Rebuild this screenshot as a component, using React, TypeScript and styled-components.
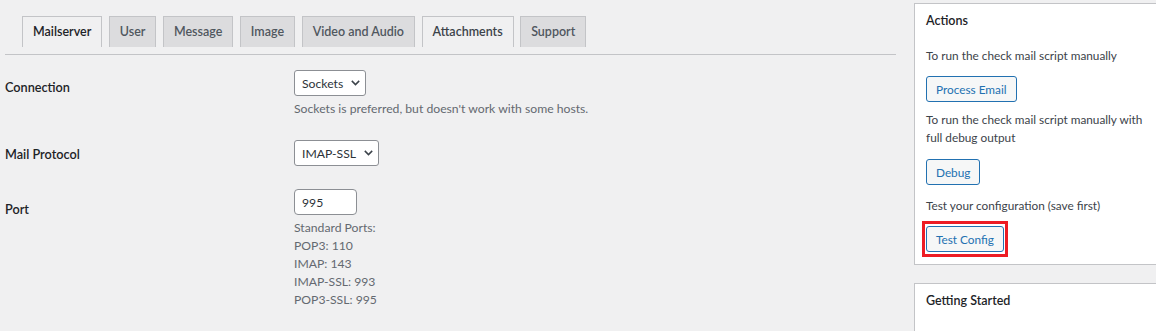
import React from "react";
import styled, { createGlobalStyle } from "styled-components";

const GlobalStyle = createGlobalStyle`
  html, body {
    margin: 0;
    padding: 0;
    overflow: hidden;
    background: #f0f0f1;
    font-family: Lato, "Liberation Sans", Arial, sans-serif;
    color: #3c434a;
  }
  * { box-sizing: border-box; }
`;

const Page = styled.div`
  display: flex;
  align-items: flex-start;
  width: 1200px;
`;

const Main = styled.div`
  flex: 0 0 891px;
  margin-left: 5px;
`;

const TabBar = styled.nav`
  display: flex;
  align-items: flex-end;
  padding: 16px 0 7px 10.5px;
  border-bottom: 1px solid #c3c4c7;
`;

type TabKind = "active" | "light" | "default";

const Tab = styled.a<{ $kind: TabKind }>`
  display: block;
  margin-left: 6.5px;
  padding: 5px 10px;
  line-height: 20px;
  font-size: 12.5px;
  font-weight: 600;
  border: 1px solid #c3c4c7;
  border-bottom: none;
  text-decoration: none;
  white-space: nowrap;
  background: ${(p) => (p.$kind === "default" ? "#dcdcde" : "#f0f0f1")};
  color: ${(p) =>
    p.$kind === "active" ? "#1d2327" : p.$kind === "light" ? "#3c434a" : "#50575e"};
`;

const Form = styled.div`
  display: flex;
  flex-direction: column;
`;

const Row = styled.div<{ $top: number }>`
  display: grid;
  grid-template-columns: 289px 1fr;
  margin-top: ${(p) => p.$top}px;
`;

const Label = styled.div<{ $offset: number }>`
  padding-top: ${(p) => p.$offset}px;
  font-size: 12.7px;
  font-weight: 600;
  line-height: 18px;
  color: #1d2327;
`;

const Field = styled.div`
  display: flex;
  flex-direction: column;
  align-items: flex-start;
`;

const SelectBox = styled.div`
  display: inline-flex;
  align-items: center;
  height: 26px;
  padding: 0 5px 0 7px;
  gap: 8px;
  background: #fff;
  border: 1px solid #8c8f94;
  border-radius: 3px;
  font-size: 12.2px;
  color: #2c3338;
  svg { display: block; }
`;

const TextInput = styled.div`
  display: flex;
  align-items: center;
  width: 63px;
  height: 26px;
  padding: 0 7px;
  background: #fff;
  border: 1px solid #8c8f94;
  border-radius: 4px;
  font-size: 12.2px;
  color: #2c3338;
`;

const Description = styled.p`
  margin: 4px 0 0;
  font-size: 12.2px;
  line-height: 18px;
  color: #646970;
`;

const Sidebar = styled.aside`
  flex: 0 0 280px;
  margin-left: 18px;
  margin-top: 3px;
  display: flex;
  flex-direction: column;
  gap: 18px;
`;

const Panel = styled.section`
  background: #fff;
  border: 1px solid #c3c4c7;
  padding: 8px 11px 7px;
  min-height: 60px;
`;

const PanelTitle = styled.h2`
  margin: 0;
  font-size: 12.5px;
  font-weight: 600;
  line-height: 18px;
  color: #1d2327;
`;

const PanelBody = styled.div`
  display: flex;
  flex-direction: column;
  align-items: flex-start;
  margin-top: 17px;
`;

const Text = styled.p<{ $gap: number }>`
  margin: ${(p) => p.$gap}px 0 0;
  font-size: 11.8px;
  line-height: 18px;
  color: #3c434a;
  &:first-child { margin-top: 0; }
`;

const Button = styled.button<{ $gap?: number }>`
  margin-top: ${(p) => p.$gap ?? 0}px;
  height: 26px;
  padding: 0 9px;
  font-family: inherit;
  font-size: 11.8px;
  font-weight: 400;
  color: #2271b1;
  background: #f6f7f7;
  border: 1px solid #2271b1;
  border-radius: 3px;
`;

const Highlight = styled.span<{ $gap: number }>`
  display: inline-flex;
  margin: ${(p) => p.$gap}px 0 0 -4px;
  padding: 2px 1px;
  border: 3px solid #ed1c24;
`;

const Chevron = () => (
  <svg width="9" height="6" viewBox="0 0 9 6" fill="none">
    <path d="M0.8 0.9 L4.5 4.6 L8.2 0.9" stroke="#3c434a" strokeWidth="1.5" />
  </svg>
);

const tabs: { label: string; kind: TabKind }[] = [
  { label: "Mailserver", kind: "active" },
  { label: "User", kind: "default" },
  { label: "Message", kind: "default" },
  { label: "Image", kind: "default" },
  { label: "Video and Audio", kind: "default" },
  { label: "Attachments", kind: "light" },
  { label: "Support", kind: "default" },
];

const ports = ["Standard Ports:", "POP3: 110", "IMAP: 143", "IMAP-SSL: 993", "POP3-SSL: 995"];

export default function App() {
  return (
    <>
      <GlobalStyle />
      <Page>
        <Main>
          <TabBar>
            {tabs.map((t) => (
              <Tab key={t.label} $kind={t.kind}>
                {t.label}
              </Tab>
            ))}
          </TabBar>
          <Form>
            <Row $top={15}>
              <Label $offset={8}>Connection</Label>
              <Field>
                <SelectBox>
                  <span>Sockets</span>
                  <Chevron />
                </SelectBox>
                <Description>Sockets is preferred, but doesn't work with some hosts.</Description>
              </Field>
            </Row>
            <Row $top={22}>
              <Label $offset={5}>Mail Protocol</Label>
              <Field>
                <SelectBox>
                  <span>IMAP-SSL</span>
                  <Chevron />
                </SelectBox>
              </Field>
            </Row>
            <Row $top={23}>
              <Label $offset={11}>Port</Label>
              <Field>
                <TextInput>995</TextInput>
                <Description>
                  {ports.map((p) => (
                    <React.Fragment key={p}>
                      {p}
                      <br />
                    </React.Fragment>
                  ))}
                </Description>
              </Field>
            </Row>
          </Form>
        </Main>
        <Sidebar>
          <Panel>
            <PanelTitle>Actions</PanelTitle>
            <PanelBody>
              <Text $gap={0}>To run the check mail script manually</Text>
              <Button $gap={11}>Process Email</Button>
              <Text $gap={9}>
                To run the check mail script manually with
                <br />
                full debug output
              </Text>
              <Button $gap={12}>Debug</Button>
              <Text $gap={12}>Test your configuration (save first)</Text>
              <Highlight $gap={6}>
                <Button>Test Config</Button>
              </Highlight>
            </PanelBody>
          </Panel>
          <Panel>
            <PanelTitle>Getting Started</PanelTitle>
          </Panel>
        </Sidebar>
      </Page>
    </>
  );
}
